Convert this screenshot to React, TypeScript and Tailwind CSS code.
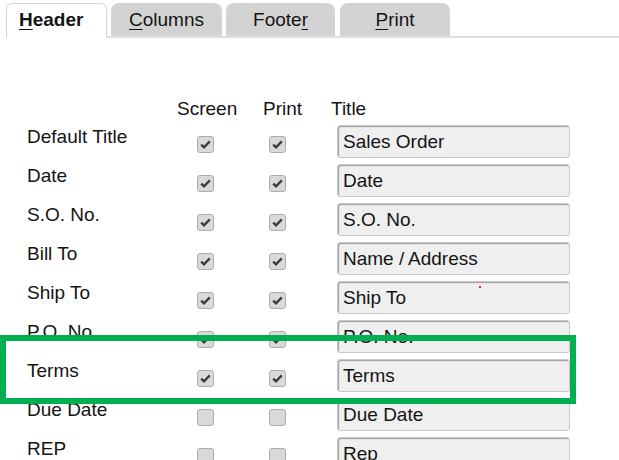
import React from "react";

type Row = { label: string; title: string; checked: boolean; dot?: boolean };

const rows: Row[] = [
  { label: "Default Title", title: "Sales Order", checked: true },
  { label: "Date", title: "Date", checked: true },
  { label: "S.O. No.", title: "S.O. No.", checked: true },
  { label: "Bill To", title: "Name /\u2009Address", checked: true },
  { label: "Ship To", title: "Ship To", checked: true, dot: true },
  { label: "P.O. No", title: "P.O. No.", checked: true },
  { label: "Terms", title: "Terms", checked: true },
  { label: "Due Date", title: "Due Date", checked: false },
  { label: "REP", title: "Rep", checked: false },
];

function Check({ checked }: { checked: boolean }) {
  return (
    <div className="mt-[11px] w-[17px] h-[17px] rounded-[3px] bg-[#d9d9d9] border border-[#adadad] flex items-center justify-center">
      {checked && (
        <svg width="11" height="9" viewBox="0 0 11 9">
          <path d="M1.2 4.6 L4 7.3 L9.8 1.4" fill="none" stroke="#3c3c3c" strokeWidth="2.4" />
        </svg>
      )}
    </div>
  );
}

export default function App() {
  return (
    <div className="relative w-[619px] h-[460px] overflow-hidden bg-white text-[19px] text-[#141414] font-['Liberation_Sans',Arial,sans-serif]">
      {/* tab strip */}
      <div className="flex items-end h-[38px]">
        <div className="ml-[6px] w-[101px] h-[35px] bg-white border-t border-l border-r border-[#d6d6d6] rounded-t-[6px] pl-[12px] pt-[5px] leading-[22px] font-bold">
          <u className="underline-offset-[3px]">H</u>eader
        </div>
        <div className="flex-1 flex items-end h-[35px] border-b-2 border-[#dedede]">
          <div className="ml-[4px] w-[111px] h-[33px] bg-[#d3d3d3] rounded-t-[8px] flex justify-center pt-[6px] leading-[22px]">
            <span>
              <u className="underline-offset-[3px]">C</u>olumns
            </span>
          </div>
          <div className="ml-[4px] w-[109px] h-[33px] bg-[#d3d3d3] rounded-t-[8px] flex justify-center pt-[6px] leading-[22px]">
            <span>
              Foote<u className="underline-offset-[3px]">r</u>
            </span>
          </div>
          <div className="ml-[5px] w-[110px] h-[33px] bg-[#d3d3d3] rounded-t-[8px] flex justify-center pt-[6px] leading-[22px]">
            <span>
              <u className="underline-offset-[3px]">P</u>rint
            </span>
          </div>
        </div>
      </div>

      {/* column headings */}
      <div className="mt-[60px] h-[27px] flex pl-[177px] leading-[22px]">
        <div className="w-[86px]">Screen</div>
        <div className="w-[68px]">Print</div>
        <div>Title</div>
      </div>

      {/* rows */}
      <div className="flex flex-col">
        {rows.map((r) => (
          <div key={r.label} className="h-[39px] flex items-start pl-[27px] shrink-0">
            <div className="w-[170px] leading-[22px] pt-[1px]">{r.label}</div>
            <div className="w-[72px]">
              <Check checked={r.checked} />
            </div>
            <div className="w-[68px]">
              <Check checked={r.checked} />
            </div>
            <div className="relative w-[233px] h-[33px] rounded-[3px] bg-[#efefef] border border-[#c9c9c9] shadow-[inset_1px_1px_1px_#9c9c9c] flex items-center pl-[5px] leading-[22px]">
              {r.title}
              {r.dot && <span className="absolute left-[141px] top-[4px] w-[2px] h-[2px] bg-[#ff2020]" />}
            </div>
          </div>
        ))}
      </div>

      {/* green highlight */}
      <div className="absolute left-0 top-[335px] w-[576px] h-[69px] border-[6px] border-[#00b050]" />
    </div>
  );
}
